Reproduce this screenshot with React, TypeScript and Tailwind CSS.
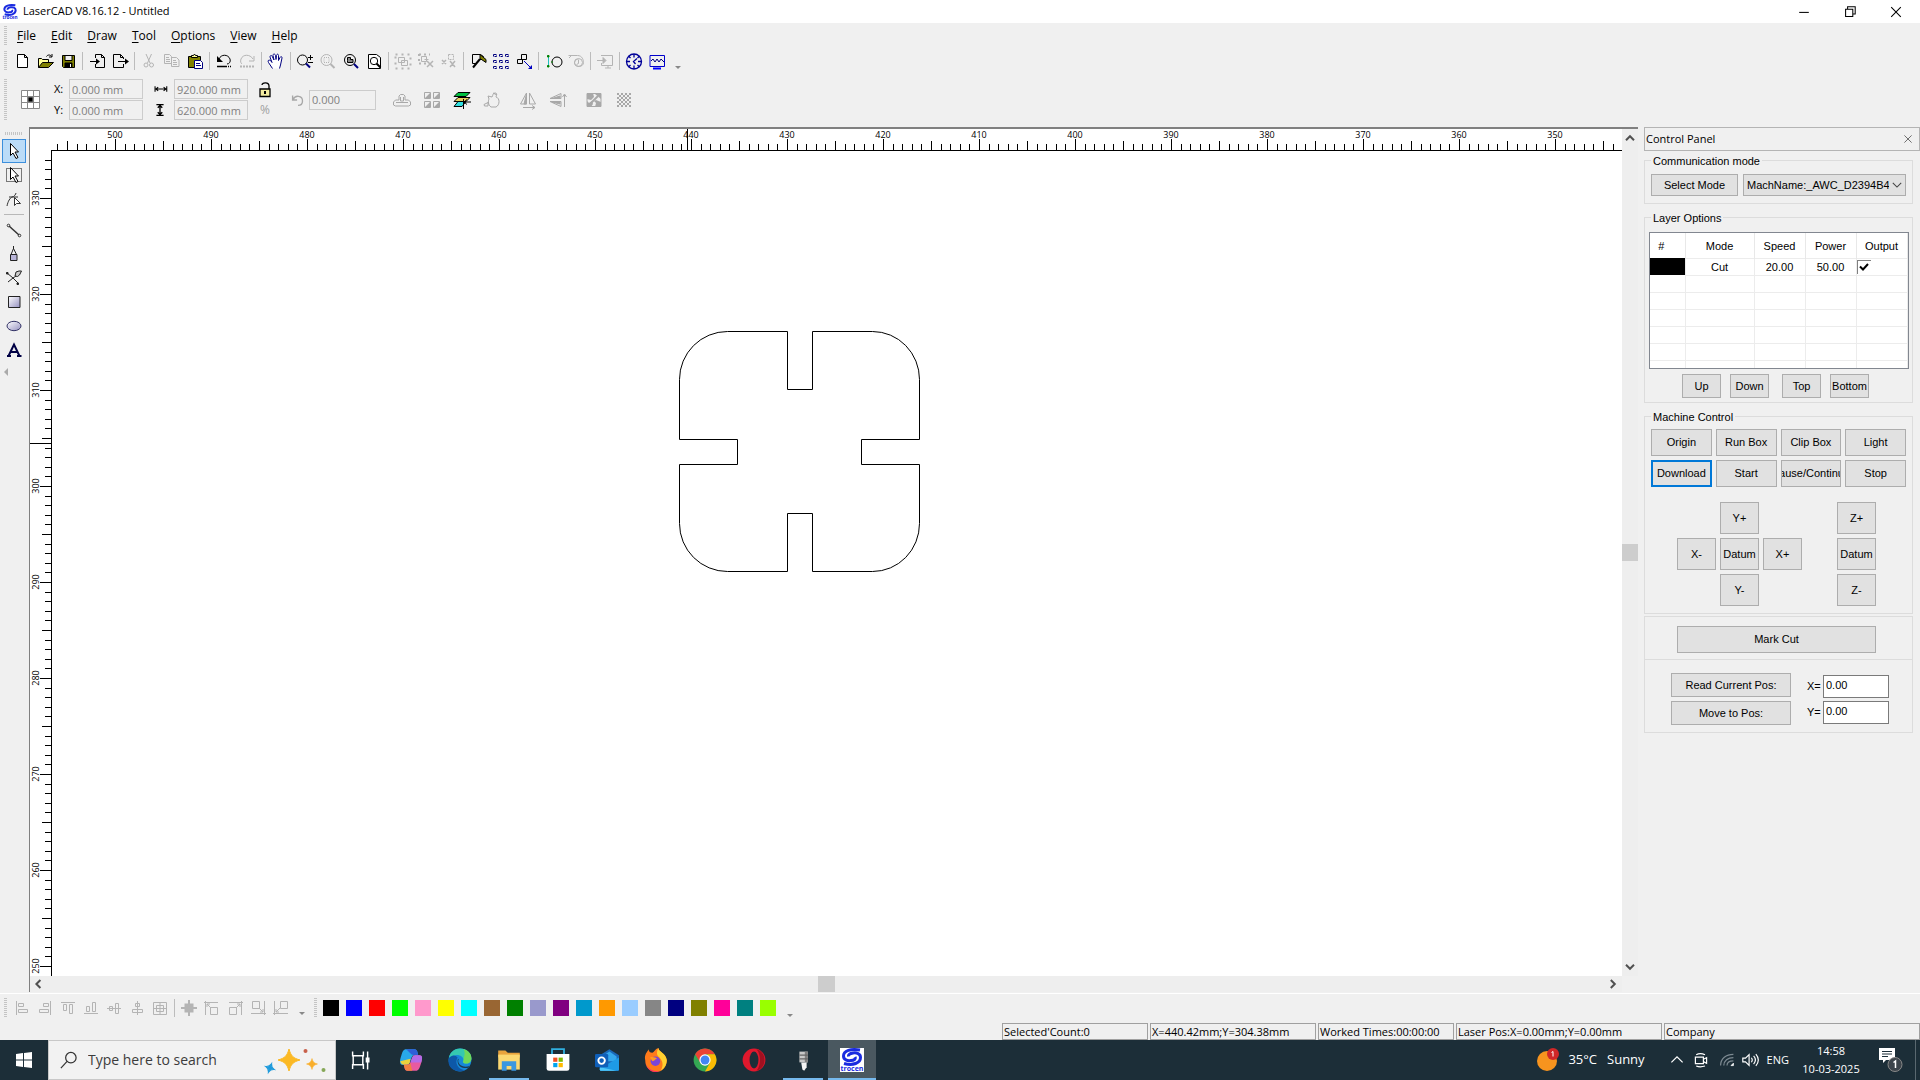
import React from "react";

type Tool = { name: string; off?: boolean; icon: React.ReactNode };

const Glyph = ({ children, className = "size-5" }: { children: React.ReactNode; className?: string }) => (
  <svg viewBox="0 0 20 20" fill="none" stroke="currentColor" className={className} aria-hidden="true">
    {children}
  </svg>
);

const page = "M5.5 3.5h7l3 3v10h-10z M12.5 3.5v3h3";

const FILE_TOOLS: (Tool | null)[] = [
  { name: "New", icon: <path d={page} fill="#fff" /> },
  {
    name: "Open",
    icon: (
      <>
        <path d="M3.5 16.5v-9h3l1 1h6v3" fill="#ffff99" />
        <path d="M3.5 16.5l4-5h11l-5 5z" fill="#808000" />
        <path d="M11.5 5.5c1-2 4-2 5 0M17 3v3h-3" />
      </>
    ),
  },
  {
    name: "Save",
    icon: (
      <>
        <path d="M4.5 4.5h12v12h-11l-1-1z" fill="#808000" />
        <path d="M7 4.5h7v5H7z" fill="#f0f0f0" />
        <path d="M7 12h7v4.5H7z" fill="#000" />
        <path d="M12.5 13v3" stroke="#fff" />
      </>
    ),
  },
  null,
  {
    name: "Import",
    icon: (
      <>
        <path d="M8.5 7v-3.5h6l3 3v10h-9V13M14.5 3.5v3h3M3 10.5h8" />
        <path d="M9 7.5l4 3-4 3z" fill="#000" stroke="none" />
      </>
    ),
  },
  {
    name: "Export",
    icon: (
      <>
        <path d="M13.5 8V6.5l-3-3h-7v13h10V13M10.5 3.5v3h3M8 10.5h8" />
        <path d="M15 7.5l4 3-4 3z" fill="#000" stroke="none" />
      </>
    ),
  },
  null,
  {
    name: "Cut",
    off: true,
    icon: (
      <>
        <path d="M7 3l4 9M12.5 3l-4 9" />
        <circle cx="7" cy="14" r="2" />
        <circle cx="12.5" cy="14" r="2" />
      </>
    ),
  },
  {
    name: "Copy",
    off: true,
    icon: <path d="M2.5 3.5h5l2 2v7h-7zM9.5 6.5h5l2.5 2.5v6.5H9.5zM4 6.5h3M4 8.5h4M4 10.5h4M11 9.5h3M11 11.5h4M11 13.5h4" />,
  },
  {
    name: "Paste",
    icon: (
      <>
        <path d="M3.5 5.5h12v11h-12z" fill="#808000" />
        <path d="M6.5 6.5v-2h2l1-1.5 1 1.5h2v2z" fill="#ffff99" />
        <path d="M9.5 9.5h6l2 2v6h-8z" fill="#fff" stroke="#000080" />
        <path d="M11 12.5h4M11 14.5h5" stroke="#000080" />
      </>
    ),
  },
  null,
  {
    name: "Undo",
    icon: (
      <>
        <path d="M5 8c2-5 9-5 11 0 1 3-1 5-3 5" />
        <path d="M3 5v6h6z" fill="#000" stroke="none" />
        <path d="M3 15.5h10" strokeWidth="1.5" />
        <path d="M14 15.5h4" strokeDasharray="1 1" strokeWidth="1.5" />
      </>
    ),
  },
  {
    name: "Redo",
    off: true,
    icon: (
      <>
        <path d="M16 8c-3-5-10-5-12 0-1 3 0 4 1 5M17 5v5h-5" />
        <path d="M3 15.5h15" strokeWidth="2" strokeDasharray="2 1" />
      </>
    ),
  },
  null,
  {
    name: "Pan",
    icon: (
      <path
        d="M6.5 17.5l-4-6c-1-2 0-3 2-2l1.5 2-2-5.5c0-2 2-2 2.5 0l1.5 3-1-4.5c0-2 2-2 2.5 0l.5 4 .5-4c.5-2 2-1.5 2 0v5l1.5-3c1-1.5 2-1 2 .5l-1.5 7-1 3.5"
        fill="#fff"
        stroke="#000080"
      />
    ),
  },
  null,
  {
    name: "Zoom",
    icon: (
      <>
        <circle cx="7.5" cy="9" r="5" />
        <path d="M13 6.5h5M15.5 4v5M13 11.5h5" />
        <path d="M11 12.5l4 4" stroke="#000080" strokeWidth="2" />
      </>
    ),
  },
  {
    name: "Zoom selection",
    off: true,
    icon: (
      <>
        <circle cx="8.5" cy="9" r="5.5" />
        <path d="M6 6.5h5v5H6z" strokeDasharray="1 1" />
        <path d="M12.5 13l4 4" strokeWidth="2" />
      </>
    ),
  },
  {
    name: "Zoom all",
    icon: (
      <>
        <circle cx="9" cy="9" r="5.5" />
        <path d="M6.5 9.5v-3h3v2h2.5v3H6.5z" fill="#888" />
        <path d="M13 13l4 4" stroke="#000080" strokeWidth="2" />
      </>
    ),
  },
  {
    name: "Zoom page",
    icon: (
      <>
        <path d="M4.5 3.5h8l4 3v11h-12z" fill="#fff" />
        <circle cx="10" cy="10" r="3.7" />
        <path d="M12.5 12.5l4 4" strokeWidth="2" />
      </>
    ),
  },
  null,
  {
    name: "Group",
    off: true,
    icon: (
      <>
        <path d="M5.5 6.5h6v5h-6zM8.5 9.5h6v5h-6z" />
        <path d="M2.5 3.5h15v14h-15z" strokeDasharray="2 4" strokeWidth="2" />
      </>
    ),
  },
  {
    name: "Ungroup",
    off: true,
    icon: (
      <>
        <path d="M5.5 5.5h5v5h-5zM8.5 8.5h4" />
        <path d="M3 3.5h11M3 12.5h7M3 3v10" strokeDasharray="2 3" strokeWidth="2" />
        <path d="M11 10l6 6M17 10l-6 6" strokeWidth="1.5" />
      </>
    ),
  },
  {
    name: "Break apart",
    off: true,
    icon: (
      <>
        <path d="M9.5 3.5h5v5h-5z" strokeDasharray="2 1" />
        <path d="M3 9l4 4M7 9l-4 4M11 10l5 6M16 10l-5 6" strokeWidth="1.5" />
      </>
    ),
  },
  null,
  {
    name: "Build",
    icon: (
      <>
        <path d="M4.5 3.5h8l3 2-2 3h-2l-4 4h-3z" />
        <path d="M12 3.5l6 5v3l-6-4z" fill="#808000" />
        <path d="M12 8l-7 8.5" strokeWidth="2" />
      </>
    ),
  },
  {
    name: "Array",
    icon: (
      <path
        d="M2.5 3.5h3v2h-3zM8.5 3.5h3v2h-3zM14.5 3.5h3v2h-3zM2.5 9.5h3v2h-3zM8.5 9.5h3v2h-3zM14.5 9.5h3v2h-3zM2.5 15.5h3v2h-3zM8.5 15.5h3v2h-3zM14.5 15.5h3v2h-3z"
        stroke="#000080"
        strokeDasharray="3 1"
      />
    ),
  },
  {
    name: "Move",
    icon: (
      <>
        <path d="M7.5 3.5h5v5h-5zM3.5 8.5h5v4h-5z" />
        <path d="M10 10l6 6" stroke="#0000c0" />
        <path d="M18 18v-4l-4 4z" fill="#0000c0" stroke="none" />
      </>
    ),
  },
  null,
  {
    name: "Lead in",
    icon: (
      <>
        <circle cx="14" cy="11" r="5" />
        <path d="M5.5 5v10" stroke="#20c0c0" />
        <path d="M4.5 4.5H6V6H4.5zM4.5 14.5H6V16H4.5zM8 11h2" fill="#008000" stroke="#008000" />
      </>
    ),
  },
  {
    name: "Measure",
    off: true,
    icon: (
      <>
        <path d="M2.5 4.5h9c5 0 6 5 6 7 0 5-8 5-9 1 0-3 1-4 3-4M12.5 8.5v4l-2 1M3 7l3-3" />
        <circle cx="12.5" cy="11.5" r="4" />
      </>
    ),
  },
  null,
  {
    name: "Simulate",
    off: true,
    icon: (
      <>
        <path d="M6 4.5h11.5v10H6.5V12M10 17h6M13 14.5V17M2 9.5h7" />
        <path d="M8 6.5l3 3-3 3z" fill="currentColor" />
      </>
    ),
  },
  null,
  {
    name: "Target",
    icon: (
      <g stroke="#000099" strokeWidth="1.3">
        <circle cx="10" cy="10.5" r="7.5" />
        <path d="M10 3v3.5M10 14.5V18M2.5 10.5H6M14 10.5h3.5M4.5 5l2 2M15.5 5l-2 2M4.5 16l2-2M15.5 16l-2-2M13 7.5l-3.5 3 2 2.5" />
      </g>
    ),
  },
  {
    name: "Monitor",
    icon: (
      <>
        <path d="M3 4.5h14.5v11H3z" stroke="#0000cc" />
        <path d="M4 10l2-2 2 3 2-3 2 3 2-3 3 3" stroke="#000080" />
        <path d="M6 17.5h8" stroke="#0000ff" strokeWidth="2" />
      </>
    ),
  },
];

const SHAPE_TOOLS: (Tool | null)[] = [
  { name: "Weld", off: true, icon: <path d="M1.5 15v-3l2-2H7V6l1.5-1.5h3L13 6v4h3.5l2 2v3l-2 1h-13zM4 12.5h12M8.5 7v4h3V7" /> },
  {
    name: "Tile",
    off: true,
    icon: (
      <>
        <path d="M2.5 2.5h6v6h-6zM11.5 2.5h6v6h-6zM2.5 11.5h6v6h-6zM11.5 11.5h6v6h-6z" />
        <path d="M3 8l5-5v5zM12 8l5-5v5zM3 17l5-5v5zM12 17l5-5v5z" fill="currentColor" stroke="none" />
      </>
    ),
  },
  {
    name: "Layers",
    icon: (
      <>
        <path d="M6 2.5h12l-4 4H2z" fill="#00c040" />
        <path d="M6 7.5h12l-4 4H2z" fill="#e8d060" />
        <path d="M6 11.5h8l-4 5H2z" fill="#30e0e0" />
        <path d="M11.5 9v10M12 12h7M15 9.5L12 12l3 2.5" />
      </>
    ),
  },
  {
    name: "Trace",
    off: true,
    icon: (
      <>
        <path d="M7 9l-1-3 4 1c1-2 1-4 3-4 3 0 1 3 1 4 4 1 4 8 0 10H9c-3-2-3-6-2-8z" />
        <path d="M2 14.5l4-2V16H2.5zM11 3l4 2" />
      </>
    ),
  },
  null,
  {
    name: "Mirror horizontal",
    off: true,
    icon: (
      <>
        <path d="M8.5 3v11h-6zM11.5 3v11h6zM5 17.5h12M14 15.5l3 2-3 2" />
        <path d="M8.5 4v10H6z" fill="currentColor" />
      </>
    ),
  },
  {
    name: "Mirror vertical",
    off: true,
    icon: (
      <>
        <path d="M13 3.5v5L2 8.5zM13 16.5v-5H2zM16.5 17V5M14.5 7l2-3 2 3" />
        <path d="M12 6v2.5H4zM12 14v-2H4z" fill="currentColor" />
      </>
    ),
  },
  null,
  {
    name: "Fit",
    off: true,
    icon: (
      <>
        <path d="M3 3.5h14v13H3z" />
        <path d="M3 3h6l1 4-3 3-4-1zM17 3v6l-6-5zM3 17v-6l2 2 3-2 1 3-2 3zM17 17h-6l1-4-2-2 2-1 5 2z" fill="currentColor" stroke="none" />
        <path d="M6 14l8-8" strokeWidth="2" />
      </>
    ),
  },
  {
    name: "Bitmap",
    off: true,
    icon: (
      <g strokeDasharray="2 2" strokeWidth="2">
        <path d="M3 4h14M3 8h14M3 12h14M3 16h14" />
        <path d="M5 6h12M5 10h12M5 14h12" />
      </g>
    ),
  },
];

const ALIGN_TOOLS: (Tool | null)[] = [
  { name: "Align left", off: true, icon: <path d="M4.5 3v14M6.5 5.5h5v3h-5zM6.5 11.5h9v3h-9z" /> },
  { name: "Align right", off: true, icon: <path d="M15.5 3v14M8.5 5.5h5v3h-5zM4.5 11.5h9v3h-9z" /> },
  { name: "Align top", off: true, icon: <path d="M3 4.5h14M5.5 6.5h3v6h-3zM11.5 6.5h3v9h-3z" /> },
  { name: "Align bottom", off: true, icon: <path d="M3 15.5h14M5.5 8.5h3v5h-3zM11.5 4.5h3v9h-3z" /> },
  { name: "Center vertically", off: true, icon: <path d="M3 10.5h14M5.5 8.5h3v4h-3zM11.5 5.5h3v10h-3z" /> },
  { name: "Center horizontally", off: true, icon: <path d="M10.5 3v14M8.5 5.5h4v3h-4zM5.5 11.5h10v3h-10z" /> },
  { name: "Center on page", off: true, icon: <path d="M3.5 4.5h13v12h-13zM6.5 7.5h7v6h-7zM10 4v12M3 10.5h14" /> },
  null,
  {
    name: "To origin",
    off: true,
    icon: <path d="M10 2v16M2 10h16M6.5 6.5h7v7h-7z" fill="currentColor" strokeWidth="2" />,
  },
  { name: "Top left", off: true, icon: <path d="M3.5 3v14M2 4.5h14M8.5 9.5h7v7h-7zM5 6l4 4M5 9V6h3" /> },
  { name: "Top right", off: true, icon: <path d="M16.5 3v14M4 4.5h14M4.5 9.5h7v7h-7zM15 6l-4 4M15 9V6h-3" /> },
  { name: "Bottom right", off: true, icon: <path d="M16.5 3v14M3 15.5h15M4.5 3.5h7v7h-7zM11 10l4 4M15 11v3h-3" /> },
  { name: "Bottom left", off: true, icon: <path d="M3.5 3v14M2 15.5h15M9.5 3.5h7v7h-7zM9 10l-4 4M5 11v3h3" /> },
];

const arrow = <path d="M6.5 2.5v12l2.5-2.5 3 5.5 2-1-3-5.5h3.5z" fill="#fff" />;

const DRAW_TOOLS: (Tool | null)[] = [
  { name: "Select", icon: arrow },
  {
    name: "Box select",
    icon: (
      <>
        <path d="M2.5 3.5h15v13h-15z" strokeDasharray="1 1" />
        {arrow}
      </>
    ),
  },
  {
    name: "Edit nodes",
    icon: (
      <>
        <path d="M3 17c1-5 3-8 5-9 2 0 4-3 4-4M5 8h9" stroke="#333" />
        <path d="M10.5 8.5v8l2-2h4z" fill="#fff" stroke="#333" />
      </>
    ),
  },
  null,
  {
    name: "Line",
    icon: (
      <g stroke="#333">
        <path d="M5 6l10 9" strokeWidth="1.5" />
        <circle cx="4.5" cy="5.5" r="1.3" />
        <circle cx="15.5" cy="15.5" r="1.3" />
      </g>
    ),
  },
  {
    name: "Polyline",
    icon: (
      <>
        <path d="M9.5 2v3M7 10.5l2.5-6 3 6" stroke="#222" />
        <path d="M6.5 10.5h6.5v6H6.5z" fill="#b8b4d8" stroke="#222" />
      </>
    ),
  },
  {
    name: "Bezier",
    icon: (
      <>
        <path d="M3 5l6 5 5 5M4 14l5-4 3-2" stroke="#222" />
        <path d="M11 8l1-4 3-1h2.5l-2 4-2 1.5z" fill="#ccc" stroke="#222" />
        <path d="M2.5 4.5H4V6H2.5zM13 15h1.5v1.5H13z" fill="#222" stroke="#222" />
      </>
    ),
  },
  { name: "Rectangle", icon: <path d="M4.5 4.5h11.5v11H4.5z" fill="url(#shade)" stroke="#222" /> },
  { name: "Ellipse", icon: <ellipse cx="10" cy="10" rx="7" ry="4.7" fill="url(#shade)" stroke="#336" /> },
  { name: "Text", icon: <path d="M4.5 16L10 4.5 15.5 16M6.5 12h7M3 16h4M13 16h4.5" stroke="#000044" strokeWidth="2" /> },
];

const MENUS = ["File", "Edit", "Draw", "Tool", "Options", "View", "Help"];

const SWATCHES = [
  "bg-[#000000]", "bg-[#0000ff]", "bg-[#ff0000]", "bg-[#00ff00]", "bg-[#ff99cc]",
  "bg-[#ffff00]", "bg-[#00ffff]", "bg-[#996633]", "bg-[#008000]", "bg-[#9999cc]",
  "bg-[#800080]", "bg-[#0099cc]", "bg-[#ff9900]", "bg-[#99ccff]", "bg-[#868686]",
  "bg-[#000080]", "bg-[#808000]", "bg-[#ff0099]", "bg-[#008080]", "bg-[#99ff00]",
];

const GripV = () => <div className="h-5 w-[3px] shrink-0 bg-[repeating-linear-gradient(#c4c4c4_0_1px,transparent_1px_2px)]" />;

const Overflow = () => (
  <svg viewBox="0 0 8 4" className="h-1 w-2 self-end" aria-hidden="true">
    <path d="M1 0h6L4 3z" fill="#888" />
  </svg>
);

const ToolStrip = ({ tools }: { tools: (Tool | null)[] }) => (
  <div className="flex items-center">
    {tools.map((tool, i) =>
      tool ? (
        <button
          key={i}
          aria-label={tool.name}
          className={`flex w-[23px] justify-center ${tool.off ? "text-[#b4b4b4]" : "text-black"}`}
        >
          <Glyph>{tool.icon}</Glyph>
        </button>
      ) : (
        <div key={i} className="flex w-1.5 justify-center">
          <div className="h-[18px] w-px bg-[#bcbcbc]" />
        </div>
      ),
    )}
  </div>
);

// swirl mark shared by the title bar and the taskbar button
const Swirl = ({ className }: { className: string }) => (
  <svg viewBox="0 0 24 24" fill="none" stroke="#1a2be0" className={className} aria-hidden="true">
    <path d="M20 2C11 .5 3.5 2.500 3.500 8c0 4 4 5 7.500 4.500 3 0 5-1.500 4-3.500" strokeWidth="3" />
    <path d="M4 15.500c9 2.500 16.500-.5 16.500-6 0-4-4-5-7.500-4.500-3 .5-5 1.500-4.500 3.500" strokeWidth="3" />
    <text x="12" y="23" textAnchor="middle" fill="#1a2be0" stroke="none" className="text-[7px] font-bold">
      trocen
    </text>
  </svg>
);

const TitleBar = () => (
  <header className="flex h-[23px] shrink-0 items-center bg-white pl-[2px] text-[11px]">
    <Swirl className="size-4" />
    <h1 className="ml-[5px] flex-1">LaserCAD V8.16.12 - Untitled</h1>
    <div className="flex pr-px">
      <button aria-label="Minimize" className="flex w-[46px] justify-center">
        <Glyph className="size-4"><path d="M4 10.5h12" strokeWidth="1.3" /></Glyph>
      </button>
      <button aria-label="Restore" className="flex w-[46px] justify-center">
        <Glyph className="size-4"><path d="M4.5 6.5h9v9h-9zM7 6V3.5h9.5v9h-3" strokeWidth="1.3" /></Glyph>
      </button>
      <button aria-label="Close" className="flex w-[46px] justify-center">
        <Glyph className="size-4"><path d="M4 4l12 12M16 4L4 16" strokeWidth="1.3" /></Glyph>
      </button>
    </div>
  </header>
);

const MenuBar = () => (
  <nav className="flex h-[25px] shrink-0 items-center pl-1">
    <GripV />
    <div className="ml-[3px] flex gap-px text-xs">
      {MENUS.map((menu) => (
        <button key={menu} className="px-[7px]">
          <span className="underline underline-offset-2">{menu[0]}</span>
          {menu.slice(1)}
        </button>
      ))}
    </div>
  </nav>
);

const SizeField = ({ label, value, mark }: { label: string; value: string; mark: React.ReactNode }) => (
  <label className="flex items-center" aria-label={label}>
    {mark}
    <input
      readOnly
      defaultValue={value}
      className="h-5 w-[74px] border border-[#cccccc] bg-transparent px-[2px] text-[11px] text-[#808080] outline-none"
    />
  </label>
);

const PropertyBar = () => (
  <div className="flex h-[53px] shrink-0 items-center pb-0.5 pl-1">
    <div className="h-[42px] w-[3px] bg-[repeating-linear-gradient(#c4c4c4_0_1px,transparent_1px_2px)]" />
    <button aria-label="Anchor" className="ml-3.5">
      <svg viewBox="0 0 19 19" className="size-[19px]" fill="#fff" stroke="#888">
        <path d="M.5.5h18v18H.5zM6.5.5v18M12.5.5v18M.5 6.5h18M.5 12.5h18" />
        <path d="M7 7h5v5H7z" fill="#000" />
      </svg>
    </button>
    <div className="ml-3.5 flex flex-col gap-px">
      <SizeField label="X" value="0.000 mm" mark={<span className="w-[15px] text-[11px]">X:</span>} />
      <SizeField label="Y" value="0.000 mm" mark={<span className="w-[15px] text-[11px]">Y:</span>} />
    </div>
    <div className="ml-2 flex flex-col gap-px">
      <SizeField
        label="Width"
        value="920.000 mm"
        mark={
          <Glyph className="mr-[5px] size-[18px]">
            <path d="M4.5 7v6M17.5 7v6M5 10h12M8 8l-2.5 2L8 12M14 8l2.5 2-2.5 2" strokeWidth="1.2" />
          </Glyph>
        }
      />
      <SizeField
        label="Height"
        value="620.000 mm"
        mark={
          <Glyph className="mr-[5px] size-[18px]">
            <path d="M6 4h8M6 16h8M10 4v12M7.5 7.5L10 5l2.5 2.5M7.5 12.5L10 15l2.5-2.5" strokeWidth="1.5" />
          </Glyph>
        }
      />
    </div>
    <div className="ml-[7px] flex flex-col items-center text-[#a0a0a0]">
      <button aria-label="Lock ratio" className="text-black">
        <Glyph>
          <path d="M7 5c0-3 7-3 7 1v4" strokeWidth="1.3" />
          <path d="M5 9h10v7.5H5z" fill="#f4eca0" strokeWidth="1.3" />
          <path d="M10 11v3" strokeWidth="2" />
        </Glyph>
      </button>
      <span className="text-xs leading-5">%</span>
    </div>
    <label className="ml-3.5 flex items-center text-[#a8a8a8]" aria-label="Rotation">
      <Glyph className="mr-[2px] size-[18px]">
        <path d="M4 5v5h5M4.5 9.5C7 4 15 5 15 11c0 3-2 5-5 5" strokeWidth="1.5" />
      </Glyph>
      <input
        readOnly
        defaultValue="0.000"
        className="h-5 w-[67px] border border-[#cccccc] bg-transparent px-[2px] text-[11px] text-[#808080] outline-none"
      />
    </label>
    <div className="ml-4 flex items-center gap-2.5">
      {SHAPE_TOOLS.map((tool, i) =>
        tool ? (
          <button key={i} aria-label={tool.name} className={tool.off ? "text-[#a8a8a8]" : "text-black"}>
            <Glyph>{tool.icon}</Glyph>
          </button>
        ) : (
          <div key={i} className="-mr-1 w-0" />
        ),
      )}
    </div>
  </div>
);

const DrawBar = () => (
  <div className="flex w-[29px] shrink-0 flex-col items-center pt-[5px] pr-[2px]">
    <div className="h-[3px] w-[18px] bg-[repeating-linear-gradient(90deg,#c4c4c4_0_1px,transparent_1px_2px)]" />
    <div className="mt-1 flex flex-col items-center">
      {DRAW_TOOLS.map((tool, i) =>
        tool ? (
          <button
            key={i}
            aria-label={tool.name}
            className={`flex size-6 items-center justify-center ${i === 0 ? "border border-[#3c8fdc] bg-[#bbdcf8]" : ""}`}
          >
            <Glyph className="size-5 shrink-0">{tool.icon}</Glyph>
          </button>
        ) : (
          <div key={i} className="my-[3px] h-px w-5 bg-[#b8b8b8]" />
        ),
      )}
    </div>
    <svg viewBox="0 0 4 8" className="mt-1.5 ml-1 h-2 w-1 self-start" aria-hidden="true">
      <path d="M4 0v8L0 4z" fill="#aaa" />
    </svg>
  </div>
);

const tickLength = (v: number) => (v % 10 === 0 ? 11 : v % 5 === 0 ? 9 : 6);

const TopRuler = () => {
  const marks = Array.from({ length: 163 }, (_, i) => 506 - i);
  return (
    <svg className="h-[22px] w-full" shapeRendering="crispEdges" aria-hidden="true">
      <rect x="21" y="21" width="100%" height="1" />
      {marks.map((v) => {
        const x = Math.round(85 + (500 - v) * 9.6);
        return (
          <g key={v}>
            <rect x={x} y={21 - tickLength(v)} width="1" height={tickLength(v)} />
            {v % 10 === 0 && (
              <text x={x} y="9" textAnchor="middle" className="text-[9px]">
                {v}
              </text>
            )}
          </g>
        );
      })}
      <rect x="657" y="0" width="1" height="22" />
    </svg>
  );
};

const SideRuler = () => {
  const marks = Array.from({ length: 86 }, (_, i) => 334 - i);
  return (
    <svg className="h-full w-[22px] shrink-0" shapeRendering="crispEdges" aria-hidden="true">
      <rect x="21" y="0" width="1" height="100%" />
      {marks.map((v) => {
        const y = Math.round(47 + (330 - v) * 9.6);
        return (
          <g key={v}>
            <rect x={21 - tickLength(v)} y={y} width={tickLength(v)} height="1" />
            {v % 10 === 0 && (
              <text transform={`translate(9 ${y}) rotate(-90)`} textAnchor="middle" className="text-[9px]">
                {v}
              </text>
            )}
          </g>
        );
      })}
      <rect x="0" y="292" width="22" height="1" />
    </svg>
  );
};

const Chevron = ({ d }: { d: string }) => (
  <Glyph className="size-4">
    <path d={d} stroke="#505050" strokeWidth="2.5" />
  </Glyph>
);

const Workspace = () => (
  <main className="mr-1.5 flex min-w-0 flex-1 flex-col border-t-2 border-l border-[#808080]">
    <div className="flex min-h-0 flex-1">
      <div className="flex min-w-0 flex-1 flex-col overflow-hidden bg-white">
        <TopRuler />
        <div className="flex min-h-0 flex-1">
          <SideRuler />
          <svg className="h-full min-w-0 flex-1" fill="none" stroke="#000" aria-label="Drawing">
            <path d="M675.5 180.5H735.5V238.5H760.5V180.5H820.5a47 48 0 0 1 47 48V288.5H809.5V313.5H867.5V372.5a47 48 0 0 1 -47 48H760.5V362.5H735.5V420.5H675.5a48 48 0 0 1 -48 -48V313.5H685.5V288.5H627.5V228.5a48 48 0 0 1 48 -48z" />
          </svg>
        </div>
      </div>
      <div className="flex w-4 flex-col items-center justify-between bg-[#eeeeee]">
        <button aria-label="Scroll up"><Chevron d="M5 14l5-5 5 5" /></button>
        <div className="h-[17px] w-4 bg-[#cdcdcd]" />
        <button aria-label="Scroll down"><Chevron d="M5 6l5 5 5-5" /></button>
      </div>
    </div>
    <div className="mr-4 flex h-4 shrink-0 items-center justify-between bg-[#eeeeee]">
      <button aria-label="Scroll left"><Chevron d="M13 5l-5 5 5 5" /></button>
      <div className="h-4 w-[17px] bg-[#cdcdcd]" />
      <button aria-label="Scroll right"><Chevron d="M6 5l5 5-5 5" /></button>
    </div>
  </main>
);

const Btn = ({ children, className = "" }: { children: React.ReactNode; className?: string }) => (
  <button className={`flex items-center justify-center overflow-hidden border bg-[#e1e1e1] whitespace-nowrap ${className}`}>
    <span className="shrink-0">{children}</span>
  </button>
);

const gray = "border-[#adadad]";

const Group = ({ title, className, children }: { title: string; className: string; children: React.ReactNode }) => (
  <fieldset className={`mr-[7px] min-w-0 border border-[#dcdcdc] px-1.5 ${className}`}>
    <legend className="h-[17px] px-[2px] pt-px leading-4">{title}</legend>
    {children}
  </fieldset>
);

const HEAD = ["#", "Mode", "Speed", "Power", "Output"];

const LayerTable = () => (
  <div className="-mr-[3px] -ml-[2px] h-[137px] overflow-hidden border border-[#828790] bg-white">
    <table className="w-[257px] table-fixed border-collapse text-center">
      <colgroup>
        <col className="w-[35px]" />
        <col className="w-[69px]" />
        <col className="w-[51px]" />
        <col className="w-[51px]" />
        <col className="w-[51px]" />
      </colgroup>
      <thead>
        <tr className="h-[25px]">
          {HEAD.map((h, i) => (
            <th key={h} className={`border-r border-[#e8e8e8] pt-px pb-0 font-normal ${i === 0 ? "pr-3" : ""}`}>
              {h}
            </th>
          ))}
        </tr>
      </thead>
      <tbody>
        <tr className="h-[17px] leading-4">
          <td className="bg-black" aria-label="Black layer" />
          <td className="border border-[#ececec]">Cut</td>
          <td className="border border-[#ececec]">20.00</td>
          <td className="border border-[#ececec]">50.00</td>
          <td className="border border-[#ececec]">
            <div className="relative size-3.5">
              <input
                type="checkbox"
                defaultChecked
                aria-label="Output"
                className="peer block size-3.5 appearance-none border-t border-l border-[#808080]"
              />
              <svg viewBox="0 0 14 14" className="pointer-events-none absolute inset-0 hidden size-3.5 peer-checked:block">
                <path d="M3 6.5l3 3L11 4" fill="none" stroke="#000" strokeWidth="2" />
              </svg>
            </div>
          </td>
        </tr>
        {[0, 1, 2, 3, 4, 5].map((row) => (
          <tr key={row} className="h-[17px]">
            {HEAD.map((h) => (
              <td key={h} className="border-r border-b border-[#ececec]" />
            ))}
          </tr>
        ))}
      </tbody>
    </table>
  </div>
);

const ControlPanel = () => (
  <aside className="flex w-[276px] shrink-0 flex-col font-['Liberation_Sans',sans-serif] text-[11px]">
    <div className="flex h-6 shrink-0 items-center justify-between border border-[#b4b4b4] px-px">
      <h2 className="font-['Open_Sans',sans-serif] text-[11px]">Control Panel</h2>
      <button aria-label="Close panel" className="mr-1 text-[#606060]">
        <Glyph className="size-3"><path d="M4 4l12 12M16 4L4 16" strokeWidth="1.5" /></Glyph>
      </button>
    </div>

    <Group title="Communication mode" className="mt-px pt-[5px] pb-[7px]">
      <div className="flex gap-[5px]">
        <Btn className={`h-[22px] w-[88px] ${gray}`}>Select Mode</Btn>
        <div className="relative w-[165px]">
          <select
            aria-label="Machine"
            className="h-[22px] w-full appearance-none border border-[#adadad] bg-[#e1e1e1] pr-4 pl-[3px] outline-none"
          >
            <option>MachName:_AWC_D2394B4</option>
          </select>
          <Glyph className="pointer-events-none absolute top-1 right-[2px] size-3.5">
            <path d="M4 7l6 6 6-6" stroke="#444" strokeWidth="1.5" />
          </Glyph>
        </div>
      </div>
    </Group>

    <Group title="Layer Options" className="mt-[5px] pt-1.5 pb-1">
      <LayerTable />
      <div className="mt-[5px] flex justify-center gap-[9px] pr-1.5">
        <Btn className={`h-6 w-[39px] ${gray}`}>Up</Btn>
        <Btn className={`h-6 w-[39px] ${gray}`}>Down</Btn>
        <Btn className={`ml-1 h-6 w-[39px] ${gray}`}>Top</Btn>
        <Btn className={`h-6 w-[39px] ${gray}`}>Bottom</Btn>
      </div>
    </Group>

    <Group title="Machine Control" className="mt-[5px] pt-1 pb-[7px]">
      <div className="grid grid-cols-4 gap-1">
        {["Origin", "Run Box", "Clip Box", "Light", "Download", "Start", "Pause/Continue", "Stop"].map((name) => (
          <Btn key={name} className={`h-[27px] ${name === "Download" ? "border-2 border-[#0078d7]" : gray}`}>
            {name}
          </Btn>
        ))}
      </div>
      <div className="mt-[15px] flex justify-between pr-[30px] pl-[26px]">
        <div className="grid grid-cols-[39px_39px_39px] grid-rows-[32px_32px_32px] gap-1">
          <Btn className={`col-start-2 ${gray}`}>Y+</Btn>
          <Btn className={`col-start-1 row-start-2 ${gray}`}>X-</Btn>
          <Btn className={`row-start-2 ${gray}`}>Datum</Btn>
          <Btn className={`row-start-2 ${gray}`}>X+</Btn>
          <Btn className={`col-start-2 row-start-3 ${gray}`}>Y-</Btn>
        </div>
        <div className="grid grid-cols-[39px] grid-rows-[32px_32px_32px] gap-1">
          <Btn className={gray}>Z+</Btn>
          <Btn className={gray}>Datum</Btn>
          <Btn className={gray}>Z-</Btn>
        </div>
      </div>
    </Group>

    <div className="mt-[2px] mr-[7px] border border-[#dcdcdc] px-8 pt-[9px] pb-1.5">
      <Btn className={`h-[27px] w-[199px] ${gray}`}>Mark Cut</Btn>
    </div>
    <div className="mr-[7px] flex gap-4 border border-t-0 border-[#dcdcdc] pt-[13px] pb-[7px] pl-[26px]">
      <div className="flex flex-col gap-1">
        <Btn className={`h-6 w-[120px] ${gray}`}>Read Current Pos:</Btn>
        <Btn className={`h-6 w-[120px] ${gray}`}>Move to Pos:</Btn>
      </div>
      <div className="flex flex-col gap-[2px] pt-px">
        {["X", "Y"].map((axis) => (
          <label key={axis} className="flex h-6 items-center">
            <span className="w-4">{axis}=</span>
            <input
              defaultValue="0.00"
              className="h-[23px] w-[66px] border border-[#7a7a7a] bg-white px-[2px] pb-[2px] outline-none"
            />
          </label>
        ))}
      </div>
    </div>
  </aside>
);

const STATUS = [
  { text: "Selected'Count:0", width: "w-[146px]" },
  { text: "X=440.42mm;Y=304.38mm", width: "w-[166px]" },
  { text: "Worked Times:00:00:00", width: "w-[136px]" },
  { text: "Laser Pos:X=0.00mm;Y=0.00mm", width: "w-[206px]" },
  { text: "Company", width: "w-[256px]" },
];

const StatusBar = () => (
  <div className="flex h-[17px] shrink-0 justify-end gap-[2px] text-[11px] leading-[15px]">
    {STATUS.map((cell) => (
      <div key={cell.text} className={`overflow-hidden border border-[#a0a0a0] pl-px whitespace-nowrap ${cell.width}`}>
        {cell.text}
      </div>
    ))}
  </div>
);

const APPS = [
  {
    name: "Task View",
    icon: <path d="M3 3v3.5h9V3M3 17.5V14h9v3.5M3.5 6.5v7.5h8V6.5M15.5 3v15M14.5 8.5h2v3h-2z" stroke="#fff" strokeWidth="1.2" />,
  },
  {
    name: "Copilot",
    icon: (
      <g stroke="none">
        <path d="M6 1h7q2 0 2.5 3l.5 2h-3q-2 0-2.5 2L9 12q-.5 2-2.5 2H3C-.5 14 1 9 2 6c1-3 1.5-5 4-5z" fill="#28a8e8" />
        <path d="M6 1h7q2 0 2.5 3l.5 2h-3q-3 0-4-2z" fill="#2f5fd8" />
        <path d="M1 11q1 3 3 3h2.5q2 0 2.5-2l.5-3z" fill="#e8d23c" />
        <path d="M14 19H7q-2 0-2.500-3L4 14h3q2 0 2.500-2L11 8q.5-2 2.500-2H17c3.500 0 2 5 1 8s-1.500 5-4 5z" fill="#e85aa0" />
        <path d="M13.5 6H17c3 0 2.5 3 1.5 6h-9L11 8q.5-2 2.5-2z" fill="#b46be8" />
        <path d="M4.5 16l-.5-2h3q2 0 2.5-1.5L11 19H7q-2 0-2.5-3z" fill="#f08040" />
      </g>
    ),
  },
  {
    name: "Edge",
    icon: (
      <g stroke="none">
        <circle cx="10" cy="10" r="9.5" fill="#1688d8" />
        <path d="M.7 8C2 3 6 .5 10 .5c6 0 9.5 4 9.5 8 0 3-2 4.5-4.5 4.5-3 0-3-1.5-2-3 0-3-4-5-7-4-3 .5-5 2-5.3 2z" fill="#35c8b0" />
        <path d="M13 1c4 1 6.5 4 6.5 7.5S17 13 15 13s-3-1.5-2-3c0-3 2-5 0-9z" fill="#6fd85a" />
        <path d="M8 8c-3 5 1 10 6 10.5C8 21-1 18 .6 9 2 6 6 5 8 8z" fill="#0d58a8" />
        <path d="M9 9c-2 4 3 8 9 6l-1 1.5c-4 1-9-1-9-5.5 0-1 0-2 1-2z" fill="#1c3a50" />
      </g>
    ),
  },
  {
    name: "File Explorer",
    running: true,
    icon: (
      <g stroke="none">
        <path d="M1 2h6l2 2h10v4H1z" fill="#e8a33d" />
        <path d="M1 5.5h18V18H1z" fill="#fbd872" />
        <path d="M4 11h12v8h-4v-4H8v4H4z" fill="#3b97e0" />
      </g>
    ),
  },
  {
    name: "Store",
    icon: (
      <g stroke="none">
        <path d="M5 5V1h10v4" fill="none" stroke="#30b0e0" strokeWidth="1.5" />
        <path d="M.5 5h19v12q0 2-2 2h-15q-2 0-2-2z" fill="#fff" />
        <path d="M6 8h3.5v3.5H6z" fill="#f25022" />
        <path d="M10.5 8H14v3.5h-3.5z" fill="#7fba00" />
        <path d="M6 12.5h3.5V16H6z" fill="#00a4ef" />
        <path d="M10.5 12.5H14V16h-3.5z" fill="#ffb900" />
      </g>
    ),
  },
  {
    name: "Outlook",
    icon: (
      <g stroke="none">
        <path d="M4 6l8-5 8 5v12q0 1-1 1H5q-1 0-1-1z" fill="#1a68b8" />
        <path d="M6 7l6-4 6 4v4H6z" fill="#35a8ec" />
        <path d="M4 17l16-9v10q0 1-1 1H5q-1 0-1-1z" fill="#1e9be6" />
        <path d="M4 16l14 3H5q-1 0-1-1z" fill="#50c8f8" />
        <rect x="0" y="5" width="11" height="11" rx="1" fill="#0f5fb8" />
        <circle cx="5.5" cy="10.5" r="2.7" fill="none" stroke="#fff" strokeWidth="1.6" />
      </g>
    ),
  },
  {
    name: "Firefox",
    icon: (
      <g stroke="none">
        <path d="M1 10C0 5 3 3 4 1c0 2 1 3 3 3 2-1 2-3 5-4 0 3 6 4 7 10 0 6-4 10-9 10S1 16 1 10z" fill="#ff7a1a" />
        <path d="M12 0c0 3 6 4 7 10 0 4-2 7-5 9 3-6 1-9-2-12-2-2-1-5 0-7z" fill="#ffd030" />
        <path d="M1 10c0 8 8 10 12 9-5 3-12-1-12-9z" fill="#ff3060" />
        <circle cx="9.5" cy="11" r="4" fill="#7a45d8" />
        <path d="M5 8c2-1 5 0 6 1-2 0-2 2-4 2z" fill="#ff9a20" />
      </g>
    ),
  },
  {
    name: "Chrome",
    icon: (
      <g stroke="none">
        <circle cx="10" cy="10" r="9.5" fill="#34a853" />
        <path d="M1.8 5.2A9.5 9.5 0 0 1 18.2 5.2H10L6 12z" fill="#ea4335" />
        <path d="M18.2 5.2A9.5 9.5 0 0 1 10 19.5l4-7-2-7.3z" fill="#fbbc05" />
        <circle cx="10" cy="10" r="4.7" fill="#fff" />
        <circle cx="10" cy="10" r="3.7" fill="#4285f4" />
      </g>
    ),
  },
  {
    name: "Opera",
    icon: (
      <g stroke="none">
        <circle cx="10" cy="10" r="9.5" fill="#e0182d" />
        <path d="M12 1c9 2 9 16 0 18 4-4 4-14 0-18z" fill="#a01020" />
        <ellipse cx="10" cy="10" rx="3.7" ry="7" fill="#1c2e38" />
      </g>
    ),
  },
  {
    name: "Engraver",
    running: true,
    icon: (
      <g stroke="none">
        <path d="M7 3h7v9H7z" fill="#c8c8c8" />
        <path d="M11.5 3H14v9h-2.5z" fill="#808080" />
        <path d="M8.5 12H13v4l-2 3-1.500-1z" fill="#f4f4f4" />
        <path d="M7 6h7M7 9h7" stroke="#666" />
      </g>
    ),
  },
];

const star = "M0-11C2-4 4-2 11 0 4 2 2 4 0 11-2 4-4 2-11 0-4-2-2-4 0-11z";

const Taskbar = () => (
  <footer className="flex h-10 shrink-0 items-stretch bg-[#1c2e38] font-['Open_Sans',sans-serif] text-white">
    <button aria-label="Start menu" className="flex w-12 items-center justify-center">
      <svg viewBox="0 0 16 16" className="size-4" fill="#fff">
        <path d="M0 2l7-1v6.5H0zM8 1l8-1v7.5H8zM0 8.5h7V15l-7-1zM8 8.5h8V16l-8-1z" />
      </svg>
    </button>
    <label className="flex w-72 items-center border border-[#c8c8c8] bg-[#f2f2f2] pl-2.5 text-[#333]">
      <Glyph className="size-[19px]">
        <circle cx="12.5" cy="7" r="5.5" strokeWidth="1.3" />
        <path d="M8.5 11L2 18" strokeWidth="1.3" />
      </Glyph>
      <input
        placeholder="Type here to search"
        className="ml-2.5 min-w-0 flex-1 bg-transparent text-sm outline-none placeholder:text-[#3c3c3c]"
      />
      <svg viewBox="0 0 64 30" className="mr-2 h-[30px] w-16" aria-hidden="true">
        <path d={star} transform="translate(26 15)" fill="#fbb924" stroke="#fbb924" />
        <path d={star} transform="translate(49 19) scale(.5)" fill="#f9ae2b" stroke="#f9ae2b" />
        <path d={star} transform="translate(7 23) rotate(20) scale(.4)" fill="#1f9bdc" stroke="#1f9bdc" strokeWidth="3" />
        <circle cx="42.5" cy="6" r="2" fill="#c8604a" />
        <circle cx="60.5" cy="25" r="2" fill="#86a858" />
      </svg>
    </label>
    <div className="flex pr-px">
      {APPS.map((app) => (
        <button key={app.name} aria-label={app.name} className="relative flex w-[49px] items-center justify-center first:mr-px">
          <Glyph className="size-6">{app.icon}</Glyph>
          {app.running && <span className="absolute bottom-0 h-[2px] w-10 bg-[#76b9ed]" />}
        </button>
      ))}
    </div>
    <button aria-label="LaserCAD" className="relative flex w-12 items-center justify-center bg-[#4a5860]">
      <span className="bg-white">
        <Swirl className="size-6" />
      </span>
      <span className="absolute bottom-0 h-[2px] w-12 bg-[#76b9ed]" />
    </button>

    <div className="ml-auto flex items-center">
      <button className="flex items-center text-[13px]">
        <svg viewBox="0 0 24 24" className="size-6" aria-hidden="true">
          <circle cx="11" cy="13" r="10" fill="#f7941e" />
          <circle cx="17" cy="6" r="6" fill="#d02828" />
          <path d="M15.5 4.5L17 3.5v5" fill="none" stroke="#fff" />
        </svg>
        <span className="ml-2">35°C</span>
        <span className="ml-2.5">Sunny</span>
      </button>
      <button aria-label="Hidden icons" className="ml-6">
        <Glyph className="size-4"><path d="M3 13l7-7 7 7" strokeWidth="1.5" /></Glyph>
      </button>
      <button aria-label="Camera" className="ml-2">
        <Glyph className="size-4">
          <path d="M3 6.5h10v8H3zM13 9l4-2v7l-4-2M4 3.5q5-3 11 0M4 17.5q5 2 11 0" strokeWidth="1.5" />
        </Glyph>
      </button>
      <button aria-label="Network" className="ml-2.5 text-[#7d8a92]">
        <Glyph className="size-4">
          <path d="M2 17C2 8 9 3 18 3M6 17c0-6 5-10 12-10M10 17c0-4 3-6 8-6" strokeWidth="1.5" />
          <path d="M15 17l3-3v3z" fill="#fff" stroke="#fff" />
        </Glyph>
      </button>
      <button aria-label="Volume" className="ml-1.5">
        <Glyph className="size-[18px]">
          <path d="M2 8h3l4-4v12l-4-4H2zM11.5 7.5q2 2.5 0 5M14 5.5q4 4.5 0 9M16.5 3.5q5.5 6.5 0 13" strokeWidth="1.3" />
        </Glyph>
      </button>
      <span className="ml-2 text-[11px]">ENG</span>
      <div className="ml-3 w-[60px] text-center text-[11px] leading-[18px] whitespace-nowrap">
        <div>14:58</div>
        <div>10-03-2025</div>
      </div>
      <button aria-label="Notifications" className="mr-3 ml-4">
        <svg viewBox="0 0 26 26" className="size-[26px]" aria-hidden="true">
          <path d="M2 1h16v12H9l-3 3v-3H2z" fill="#fff" />
          <path d="M5 4.5h10M5 7h10M5 9.5h6" stroke="#1c2e38" />
          <circle cx="18" cy="17.5" r="7" fill="#3c444b" stroke="#888" />
          <path d="M16.5 15.5l2-1.5v7" fill="none" stroke="#fff" strokeWidth="1.5" />
        </svg>
      </button>
      <div className="mr-1 h-10 w-px bg-[#5a6870]" />
    </div>
  </footer>
);

export default function App() {
  return (
    <div className="flex h-screen flex-col overflow-hidden bg-[#f0f0f0] font-['Open_Sans',sans-serif] text-black">
      <svg className="absolute size-0" aria-hidden="true">
        <linearGradient id="shade" x1="0" y1="0" x2="1" y2="1">
          <stop offset="0" stopColor="#fff" />
          <stop offset="1" stopColor="#9490c0" />
        </linearGradient>
      </svg>
      <TitleBar />
      <MenuBar />
      <div className="flex h-[26px] shrink-0 items-center pl-1">
        <GripV />
        <div className="ml-[3px] flex h-full items-center">
          <ToolStrip tools={FILE_TOOLS} />
          <div className="ml-1.5 flex h-full pb-1">
            <Overflow />
          </div>
        </div>
      </div>
      <PropertyBar />
      <div className="flex min-h-0 flex-1">
        <DrawBar />
        <Workspace />
        <ControlPanel />
      </div>
      <div className="mt-px flex h-[30px] shrink-0 items-center border-t border-white pb-0.5 pl-1">
        <GripV />
        <div className="ml-[3px] flex items-center">
          <ToolStrip tools={ALIGN_TOOLS} />
          <div className="ml-1.5 flex h-4">
            <Overflow />
          </div>
        </div>
        <div className="mr-1.5 ml-2">
          <GripV />
        </div>
        <div className="flex gap-[7px]">
          {SWATCHES.map((color) => (
            <button key={color} aria-label="Color swatch" className={`size-4 ${color}`} />
          ))}
        </div>
        <div className="ml-2.5 flex h-5">
          <Overflow />
        </div>
      </div>
      <StatusBar />
      <Taskbar />
    </div>
  );
}
